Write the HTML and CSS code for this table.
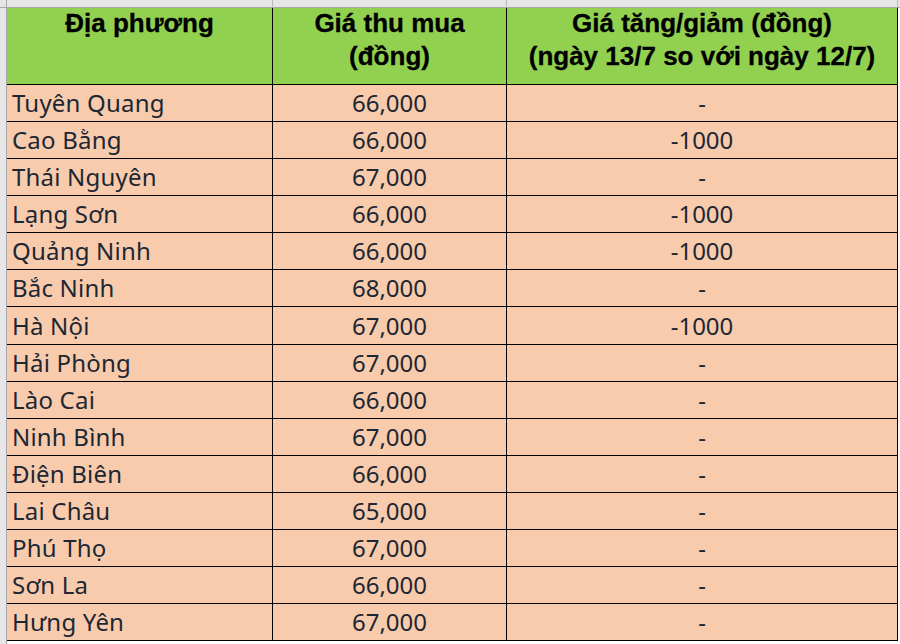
FILE: index.html
```html
<!DOCTYPE html>
<html lang="vi">
<head>
<meta charset="utf-8">
<link rel="stylesheet" href="styles.css">
</head>
<body>
<div class="sheet">
  <div class="colheads">
    <div class="corner"></div>
    <div class="colhead c1"></div>
    <div class="colhead c2"></div>
    <div class="colhead c3"></div>
    <div class="colhead rest"></div>
  </div>
  <div class="body">
    <div class="gutter"></div>
    <table class="grid">
      <thead>
        <tr class="head">
          <th class="c1"><div class="htext">Địa phương</div></th>
          <th class="c2"><div class="htext">Giá thu mua<br>(đồng)</div></th>
          <th class="c3"><div class="htext">Giá tăng/giảm (đồng)<br>(ngày 13/7 so với ngày 12/7)</div></th>
        </tr>
      </thead>
      <tbody>
        <tr><td class="name">Tuyên Quang</td><td>66,000</td><td>-</td></tr>
        <tr><td class="name">Cao Bằng</td><td>66,000</td><td>-1000</td></tr>
        <tr><td class="name">Thái Nguyên</td><td>67,000</td><td>-</td></tr>
        <tr><td class="name">Lạng Sơn</td><td>66,000</td><td>-1000</td></tr>
        <tr><td class="name">Quảng Ninh</td><td>66,000</td><td>-1000</td></tr>
        <tr><td class="name">Bắc Ninh</td><td>68,000</td><td>-</td></tr>
        <tr><td class="name">Hà Nội</td><td>67,000</td><td>-1000</td></tr>
        <tr><td class="name">Hải Phòng</td><td>67,000</td><td>-</td></tr>
        <tr><td class="name">Lào Cai</td><td>66,000</td><td>-</td></tr>
        <tr><td class="name">Ninh Bình</td><td>67,000</td><td>-</td></tr>
        <tr><td class="name">Điện Biên</td><td>66,000</td><td>-</td></tr>
        <tr><td class="name">Lai Châu</td><td>65,000</td><td>-</td></tr>
        <tr><td class="name">Phú Thọ</td><td>67,000</td><td>-</td></tr>
        <tr><td class="name">Sơn La</td><td>66,000</td><td>-</td></tr>
        <tr><td class="name">Hưng Yên</td><td>67,000</td><td>-</td></tr>
      </tbody>
    </table>
  </div>
</div>
</body>
</html>
```
FILE: styles.css
```css
html, body {
  margin: 0;
  padding: 0;
  background: #ffffff;
}

.sheet {
  width: 900px;
  height: 644px;
  overflow: hidden;
}

.colheads {
  display: flex;
  height: 7px;
  background: #e6e6e6;
  border-bottom: 1px solid #a6a6a6;
}

.corner {
  width: 6px;
  border-right: 1px solid #a6a6a6;
}

.colhead {
  border-right: 1px solid #b8b8b8;
}

.colhead.c1 { width: 265px; }
.colhead.c2 { width: 233px; }
.colhead.c3 { width: 390px; }
.colhead.rest { flex: 1; border-right: none; }

.body {
  display: flex;
  align-items: flex-start;
}

.gutter {
  width: 6px;
  height: 640px;
  background: #e6e6e6;
  border-right: 1px solid #a6a6a6;
  flex: none;
}

.grid {
  border-collapse: collapse;
  table-layout: fixed;
  width: 891px;
  flex: none;
}

.grid th,
.grid td {
  border: 1px solid #000000;
  padding: 0;
}

.grid tr > :first-child { border-left: none; }
.grid thead th { border-top: none; }

.grid th.c1 { width: 265px; }
.grid th.c2 { width: 233px; }
.grid th.c3 { width: 390px; }

.head th {
  height: 76px;
  background: #92d050;
  color: #000000;
  font-family: "Liberation Sans", Arial, sans-serif;
  font-weight: bold;
  font-size: 26px;
  line-height: 33px;
  text-align: center;
  vertical-align: top;
  -webkit-text-stroke: 0.3px #000000;
}

.htext {
  margin-top: -1px;
}

.grid tbody tr {
  height: 37.08px;
}

.grid tbody td {
  background: #f8cbad;
  color: #1c2733;
  font-family: "Noto Sans", "Open Sans", sans-serif;
  font-size: 24px;
  line-height: 34px;
  text-align: center;
  vertical-align: middle;
}

.grid tbody td.name {
  text-align: left;
  padding-left: 5px;
  letter-spacing: 0.2px;
}
```
